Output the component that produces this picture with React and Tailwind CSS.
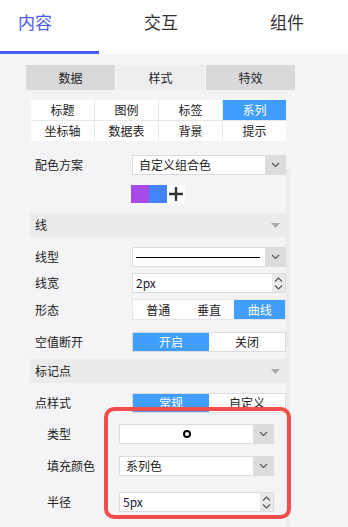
import React from "react";

const font = { fontFamily: '"Noto Sans CJK SC", "Noto Sans", sans-serif' };

function Chevron() {
  return (
    <svg width="9" height="6" viewBox="0 0 9 6" fill="none">
      <path d="M1 1 L4.5 4.5 L8 1" stroke="#555" strokeWidth="1.1" />
    </svg>
  );
}

function Select({ children, arrowW = "w-[20px]" }) {
  return (
    <div className="flex h-full w-full border border-[#dcdcdf] bg-white">
      <div className="flex flex-1 items-center">{children}</div>
      <div className={`flex ${arrowW} items-center justify-center bg-[#dcdcdf]`}>
        <Chevron />
      </div>
    </div>
  );
}

function Spinner({ value }) {
  return (
    <div className="flex h-full w-full border border-[#dcdcdf] bg-white">
      <div className="flex flex-1 items-center pl-[3px] text-[12px] text-[#1a1a3a]">
        {value}
      </div>
      <div className="flex w-[13px] flex-col items-center justify-center gap-[3px] bg-[#e9e9ec]">
        <svg width="9" height="5" viewBox="0 0 9 5" fill="none">
          <path d="M1 4.5 L4.5 1 L8 4.5" stroke="#555" strokeWidth="1.1" />
        </svg>
        <svg width="9" height="5" viewBox="0 0 9 5" fill="none">
          <path d="M1 0.5 L4.5 4 L8 0.5" stroke="#555" strokeWidth="1.1" />
        </svg>
      </div>
    </div>
  );
}

function Row({ label, mt, h = "h-[20px]", children }) {
  return (
    <div className={`flex ${h} ${mt} items-center`}>
      <div className="w-[102px] pl-[5px] text-[12px] text-[#222]">{label}</div>
      <div className="h-full w-[154px]">{children}</div>
    </div>
  );
}

function SubRow({ label, mt, children }) {
  return (
    <div className={`flex h-[20px] ${mt} items-center`}>
      <div className="w-[89px] pl-[17px] text-[12px] text-[#222]">{label}</div>
      <div className="h-full w-[155px]">{children}</div>
    </div>
  );
}

function Header({ title, mt }) {
  return (
    <div className={`flex h-[24px] ${mt} items-center justify-between bg-[#ebebeb] pl-[5px] pr-[6px] text-[12px] text-[#222]`}>
      <span>{title}</span>
      <svg width="9" height="5" viewBox="0 0 9 5">
        <path d="M0 0 L9 0 L4.5 5 Z" fill="#aaa" />
      </svg>
    </div>
  );
}

function Segmented({ items, active, bordered = true }) {
  return (
    <div className={`flex h-full w-full bg-white ${bordered ? "border border-[#dcdcdf]" : "border border-[#e4e4e6]"}`}>
      {items.map((it, i) => (
        <div
          key={it}
          className={`flex flex-1 items-center justify-center text-[12px] ${
            i === active ? "bg-[#409eff] text-white" : "text-[#222]"
          }`}
        >
          {it}
        </div>
      ))}
    </div>
  );
}

export default function App() {
  return (
    <div className="flex min-h-[527px] w-[348px] flex-col overflow-hidden bg-[#f4f4f6]" style={font}>
      <div className="flex h-[54px] bg-white">
        <div className="w-[99px] border-b-[3px] border-[#4a5af5] pl-[18px] pt-[9px] text-[17px] text-[#4a5af5]">
          内容
        </div>
        <div className="ml-[45px] pt-[9px] text-[17px] text-[#333]">交互</div>
        <div className="ml-[92px] pt-[9px] text-[17px] text-[#333]">组件</div>
      </div>

      <div className="ml-[26px] mt-[11px] grid h-[25px] w-[269px] grid-cols-3 gap-px bg-[#f8f8f9] text-[12px] text-[#222]">
        <div className="flex items-center justify-center bg-[#d9d9dc]">数据</div>
        <div className="flex items-center justify-center bg-[#eeeef0]">样式</div>
        <div className="flex items-center justify-center bg-[#d9d9dc]">特效</div>
      </div>

      <div className="ml-[31px] mt-[10px] grid w-[255px] grid-cols-4 gap-px bg-[#e8e8ea] text-[12px] text-[#222]">
        {["标题", "图例", "标签", "系列", "坐标轴", "数据表", "背景", "提示"].map((t) => (
          <div
            key={t}
            className={`flex h-[20px] items-center justify-center ${
              t === "系列" ? "bg-[#409eff] text-white" : "bg-white"
            }`}
          >
            {t}
          </div>
        ))}
      </div>

      <div className="ml-[30px] flex flex-1">
        <div className="w-[256px] pb-[8px]">
          <Row label="配色方案" mt="mt-[14px]">
            <Select>
              <span className="pl-[6px] text-[12px] text-[#222]">自定义组合色</span>
            </Select>
          </Row>

          <div className="ml-[101px] mt-[10px] flex h-[18px]">
            <div className="w-[18px] bg-[#a64ae8]" />
            <div className="w-[18px] bg-[#4284f8]" />
            <div className="flex w-[18px] items-center justify-center bg-white">
              <svg width="14" height="14" viewBox="0 0 14 14">
                <path d="M7 0 V14 M0 7 H14" stroke="#333" strokeWidth="2.4" />
              </svg>
            </div>
          </div>

          <Header title="线" mt="mt-[10px]" />

          <Row label="线型" mt="mt-[10px]">
            <Select>
              <div className="ml-[3px] h-px w-[124px] bg-black" />
            </Select>
          </Row>

          <Row label="线宽" mt="mt-[6px]">
            <Spinner value="2px" />
          </Row>

          <Row label="形态" mt="mt-[6px]" h="h-[21px]">
            <Segmented items={["普通", "垂直", "曲线"]} active={2} bordered={false} />
          </Row>

          <Row label="空值断开" mt="mt-[12px]">
            <Segmented items={["开启", "关闭"]} active={0} />
          </Row>

          <Header title="标记点" mt="mt-[7px]" />

          <Row label="点样式" mt="mt-[10px]">
            <Segmented items={["常规", "自定义"]} active={0} />
          </Row>

          <div className="relative pb-[6px] pt-[11px]">
            <SubRow label="类型" mt="mt-0">
              <Select>
                <div className="flex flex-1 justify-center">
                  <div className="h-[8px] w-[8px] rounded-full border-2 border-black" />
                </div>
              </Select>
            </SubRow>
            <SubRow label="填充颜色" mt="mt-[12px]">
              <Select>
                <span className="pl-[6px] text-[12px] text-[#222]">系列色</span>
              </Select>
            </SubRow>
            <SubRow label="半径" mt="mt-[16px]">
              <Spinner value="5px" />
            </SubRow>
            <div className="pointer-events-none absolute left-[74px] top-[-6px] h-[112px] w-[187px] rounded-[10px] border-4 border-[#f24d4d]" />
          </div>
        </div>
        <div className="mt-[28px] w-[4px] bg-[#ebebeb]" />
      </div>
    </div>
  );
}
